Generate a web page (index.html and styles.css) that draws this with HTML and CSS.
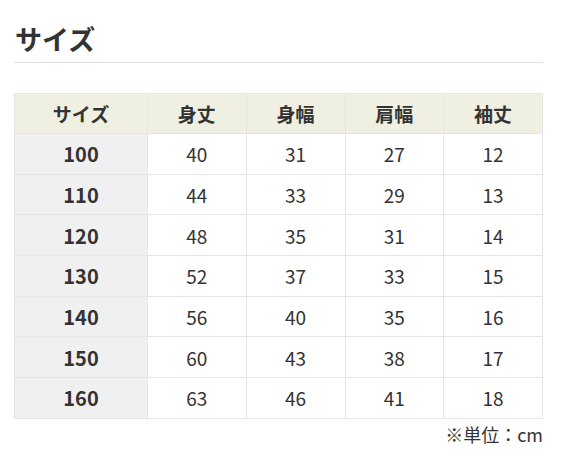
FILE: index.html
```html
<!DOCTYPE html>
<html lang="ja">
<head>
<meta charset="utf-8">
<link rel="stylesheet" href="styles.css">
</head>
<body>
<div class="wrap">
  <h2 class="title">サイズ</h2>
  <table class="size-table">
    <thead>
      <tr><th>サイズ</th><th>身丈</th><th>身幅</th><th>肩幅</th><th>袖丈</th></tr>
    </thead>
    <tbody>
      <tr><th>100</th><td>40</td><td>31</td><td>27</td><td>12</td></tr>
      <tr><th>110</th><td>44</td><td>33</td><td>29</td><td>13</td></tr>
      <tr><th>120</th><td>48</td><td>35</td><td>31</td><td>14</td></tr>
      <tr><th>130</th><td>52</td><td>37</td><td>33</td><td>15</td></tr>
      <tr><th>140</th><td>56</td><td>40</td><td>35</td><td>16</td></tr>
      <tr><th>150</th><td>60</td><td>43</td><td>38</td><td>17</td></tr>
      <tr><th>160</th><td>63</td><td>46</td><td>41</td><td>18</td></tr>
    </tbody>
  </table>
  <p class="note">※単位：cm</p>
</div>
</body>
</html>
```
FILE: styles.css
```css
html, body { margin: 0; padding: 0; background: #fff; }
body {
  font-family: "Noto Sans CJK JP", "Noto Sans", sans-serif;
  color: #333;
}
.wrap { padding: 0 24px 0 14px; width: 529px; }
.title {
  margin: 0;
  padding: 22px 0 6px 1px;
  font-size: 27px;
  line-height: 34px;
  font-weight: 700;
  border-bottom: 1px solid #e0e0e0;
}
.size-table {
  margin-top: 30px;
  width: 529px;
  border-collapse: collapse;
  table-layout: fixed;
  font-size: 19px;
}
.size-table th, .size-table td {
  border: 1px solid #e5e5e5;
  text-align: center;
  height: 40.7px;
  padding: 0;
  box-sizing: border-box;
}
.size-table thead th { height: 40px; }
.size-table th:first-child { width: 133px; }
.size-table thead th { background: #efefe2; font-weight: 700; }
.size-table tbody th { background: #f0f0f0; font-weight: 700; font-size: 20px; }
.size-table td { font-weight: 400; }
.note {
  margin: 2px 0 0;
  text-align: right;
  font-size: 18px;
  line-height: 26px;
}
```
